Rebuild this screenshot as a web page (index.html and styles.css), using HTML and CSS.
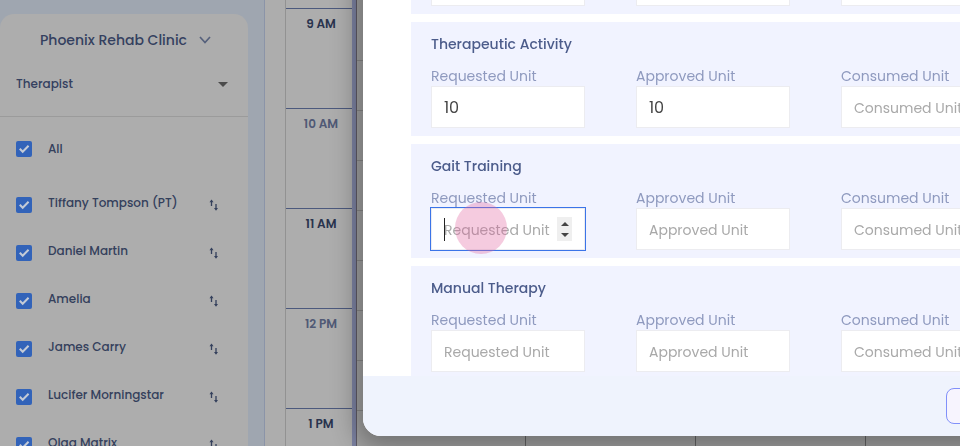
FILE: index.html
```html
<!DOCTYPE html>
<html lang="en">
<head>
<meta charset="utf-8">
<title>Authorization units</title>
<link rel="stylesheet" href="styles.css">
</head>

<body>
<div class="page">
	<div class="sidebar">
		<button type="button" class="clinic">Phoenix Rehab Clinic
			<svg width="12" height="8" viewBox="0 0 12 8"><path d="M1 1l5 5.5L11 1" fill="none" stroke="currentColor" stroke-width="1.7"/></svg>
		</button>
		<button type="button" class="filter">Therapist <i class="arrow"></i></button>
		<div class="check_all">
			<input type="checkbox" id="t0" checked><label for="t0">All</label>
		</div>
		<ul class="therapists">
			<li><input type="checkbox" id="t1" checked><label for="t1">Tiffany Tompson (PT)</label><svg class="sort" viewBox="0 0 10 12"><use href="#sort"/></svg></li>
			<li><input type="checkbox" id="t2" checked><label for="t2">Daniel Martin</label><svg class="sort" viewBox="0 0 10 12"><use href="#sort"/></svg></li>
			<li><input type="checkbox" id="t3" checked><label for="t3">Amelia</label><svg class="sort" viewBox="0 0 10 12"><use href="#sort"/></svg></li>
			<li><input type="checkbox" id="t4" checked><label for="t4">James Carry</label><svg class="sort" viewBox="0 0 10 12"><use href="#sort"/></svg></li>
			<li><input type="checkbox" id="t5" checked><label for="t5">Lucifer Morningstar</label><svg class="sort" viewBox="0 0 10 12"><use href="#sort"/></svg></li>
			<li><input type="checkbox" id="t6" checked><label for="t6">Olga Matrix</label><svg class="sort" viewBox="0 0 10 12"><use href="#sort"/></svg></li>
		</ul>
	</div>
	<div class="calendar">
		<div class="hours">
			<div class="hour">9 AM</div>
			<div class="hour light">10 AM</div>
			<div class="hour">11 AM</div>
			<div class="hour light">12 PM</div>
			<div class="hour">1 PM</div>
		</div>
		<div class="slots">
			<div class="day"></div>
			<div class="day"></div>
			<div class="day"></div>
			<div class="day"></div>
		</div>
	</div>
</div>

<div class="modal" role="dialog" aria-label="Units">
	<div class="modal_body">
		<div class="unit">
			<h3></h3>
			<div class="fields">
				<div class="field"><input type="text" aria-label="Requested Unit"></div>
				<div class="field"><input type="text" aria-label="Approved Unit"></div>
				<div class="field"><input type="text" aria-label="Consumed Unit"></div>
			</div>
		</div>
		<div class="unit">
			<h3>Therapeutic Activity</h3>
			<div class="fields">
				<div class="field"><label for="ta1">Requested Unit</label><input type="text" id="ta1" placeholder="Requested Unit" value="10"></div>
				<div class="field"><label for="ta2">Approved Unit</label><input type="text" id="ta2" placeholder="Approved Unit" value="10"></div>
				<div class="field"><label for="ta3">Consumed Unit</label><input type="text" id="ta3" placeholder="Consumed Unit"></div>
			</div>
		</div>
		<div class="unit">
			<h3>Gait Training</h3>
			<div class="fields">
				<div class="field active">
					<label for="gt1">Requested Unit</label><input type="text" id="gt1" placeholder="Requested Unit">
					<span class="caret"></span>
					<span class="spin"><i class="up"></i><i class="down"></i></span>
					<span class="touch"></span>
				</div>
				<div class="field"><label for="gt2">Approved Unit</label><input type="text" id="gt2" placeholder="Approved Unit"></div>
				<div class="field"><label for="gt3">Consumed Unit</label><input type="text" id="gt3" placeholder="Consumed Unit"></div>
			</div>
		</div>
		<div class="unit">
			<h3>Manual Therapy</h3>
			<div class="fields">
				<div class="field"><label for="mt1">Requested Unit</label><input type="text" id="mt1" placeholder="Requested Unit"></div>
				<div class="field"><label for="mt2">Approved Unit</label><input type="text" id="mt2" placeholder="Approved Unit"></div>
				<div class="field"><label for="mt3">Consumed Unit</label><input type="text" id="mt3" placeholder="Consumed Unit"></div>
			</div>
		</div>
	</div>
	<div class="modal_foot">
		<button type="button" class="cancel" aria-label="Cancel"></button>
	</div>
</div>

<svg width="0" height="0" class="defs">
	<symbol id="sort" viewBox="0 0 10 12"><path d="M2.500 7V1.500M7 5v5" fill="none" stroke="currentColor" stroke-width="1.300"/><path d="M.5 3.200L2.500.5l2 2.700zM5 9l2 2.700L9 9z" fill="currentColor"/></symbol>
</svg>
</body>
</html>
```

FILE: styles.css
```css
*{ padding:0; margin:0; box-sizing:border-box;}
ul{ list-style:none;}
body{ background:#9fa6b0; color:#34405c; font-family:Poppins,Inter,"Liberation Sans",sans-serif; font-size:12px; overflow:hidden;}
button,input{ font-family:inherit;}
.defs{ position:absolute;}

.page{ display:flex; height:100vh; overflow:hidden;}

/* sidebar */
.sidebar{ background:#adadad; border-radius:14px 14px 0 0; flex:0 0 248px; font-weight:500; margin-top:14px;}
.clinic,.filter{ background:none; border:0; color:#34405f; display:flex; align-items:center; font-weight:500; width:100%;}
.clinic{ font-size:14px; gap:12px; height:52px; padding-left:40px;}
.clinic svg{ color:#56617c;}
.filter{ border-bottom:1px solid #9b9b9b; font-size:12px; height:51px; justify-content:space-between; padding:0 20px 14px 16px;}
.arrow{ border:5px solid transparent; border-top-color:#4b4b4b; border-bottom:0;}
.check_all,.therapists li{ display:flex; align-items:center; height:48px; padding:0 28px 0 16px;}
.check_all{ height:64px;}
.therapists li label{ padding-bottom:5px;}
.sidebar label{ flex:1; padding-left:16px;}
.sidebar input{ appearance:none; background:#3263b9; border-radius:2px; height:16px; width:16px;}
.sidebar input::before{ background:#c3cad6; clip-path:polygon(19% 53%,28% 44%,42% 58%,74% 25%,83% 34%,42% 76%); content:""; display:block; height:16px;}
.sort{ height:12px; width:12px;}

/* calendar */
.calendar{ background:#adadad; border-left:1px solid #8b94a8; display:flex; flex:1; margin-left:16px; padding-left:20px;}
.hours{ border-left:1px solid #929292; border-right:4px solid #7d83a3; flex:0 0 71px; padding-top:8px;}
.hour{ border-top:1px solid #4c597d; color:#29334d; font-size:12px; font-weight:600; height:100px; line-height:16px; padding:7px 0 0 4px; text-align:center;}
.hour.light{ color:#505975;}
.slots{ background:repeating-linear-gradient(#a4a4a4 0 49px,#8a8a8a 49px 50px) 0 11px; border-left:1px solid #605c68; display:flex; flex:1; overflow:hidden;}
.day{ border-right:1px solid #666; flex:0 0 170px;}
.day:first-child{ flex-basis:169px;}

/* modal */
.modal{ background:#fff; border-radius:18px; box-shadow:0 5px 24px 8px rgba(0,0,0,.3); display:flex; flex-direction:column; overflow:hidden; position:fixed; top:-100px; right:-220px; bottom:10px; left:363px;}
.modal_body{ flex:1; overflow:hidden; padding:0 48px;}
.unit{ background:#f1f3ff; margin-bottom:8px; padding:12px 20px 8px;}
.unit h3{ color:#4c5c8b; font-size:14px; font-weight:500; height:20px; line-height:20px; margin-bottom:12px;}
.fields{ display:grid; gap:51px; grid-template-columns:repeat(3,154px);}
.field{ display:flex; flex-direction:column; justify-content:flex-end; height:62px; position:relative;}
.field label{ color:#8f9abf; font-size:14px; line-height:20px;}
.field input{ background:#fff; border:1px solid #ececf0; color:#444; font-size:16px; height:42px; outline:0; padding:0 12px; width:100%;}
.field input::placeholder{ color:#a9a9a9; font-size:14px; opacity:1;}
.active input{ box-shadow:0 0 0 1px #3b74e8;}
.caret{ background:#222; height:23px; width:1px; position:absolute; left:13px; top:30px;}
.spin{ background:#efefef; display:flex; flex-direction:column; align-items:center; justify-content:space-between; height:24px; padding:5px 0 4px; width:15px; position:absolute; right:13px; top:29px;}
.up,.down{ border:4px solid transparent;}
.up{ border-bottom-color:#444; border-top:0;}
.down{ border-top-color:#444; border-bottom:0;}
.touch{ background:rgba(224,96,158,.33); border-radius:50%; height:52px; width:52px; position:absolute; left:24px; top:14px;}
.modal_foot{ background:#eff3fd; display:flex; justify-content:flex-end; height:60px; padding:12px 48px;}
.cancel{ background:#f7f4fe; border:1px solid #8190fa; border-radius:8px; height:36px; width:186px;}
```
